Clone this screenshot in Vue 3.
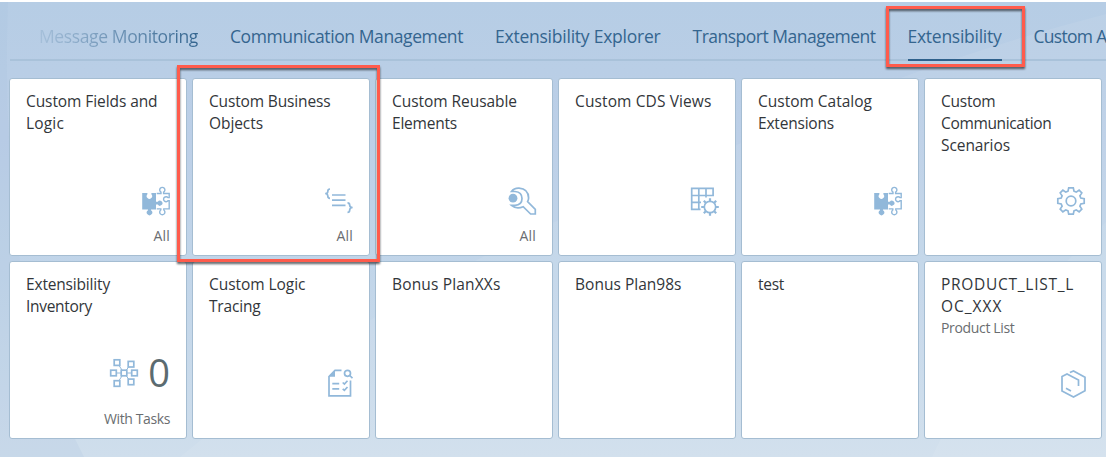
<script setup>
const tabs = [
  { label: 'Message Monitoring', width: 159, faded: true },
  { label: 'Communication Management', width: 233 },
  { label: 'Extensibility Explorer', width: 165.5 },
  { label: 'Transport Management', width: 183 },
  { label: 'Extensibility', width: 94, active: true },
  { label: 'Custom A', width: 73 },
]

const tiles = [
  { lines: [['Custom Fields and', 131.5], ['Logic', 38]], icon: 'puzzle', footer: 'All', footerWidth: 16.5 },
  { lines: [['Custom Business', 121.5], ['Objects', 54]], icon: 'braces', footer: 'All', footerWidth: 16.5 },
  { lines: [['Custom Reusable', 125], ['Elements', 65]], icon: 'wrench', footer: 'All', footerWidth: 16.5 },
  { lines: [['Custom CDS Views', 136.5]], icon: 'table' },
  { lines: [['Custom Catalog', 114], ['Extensions', 76]], icon: 'puzzle' },
  { lines: [['Custom', 54.5], ['Communication', 110.5], ['Scenarios', 69]], icon: 'gear' },
  { lines: [['Extensibility', 84], ['Inventory', 66]], icon: 'network', value: '0', footer: 'With Tasks', footerWidth: 66 },
  { lines: [['Custom Logic', 96.5], ['Tracing', 51.5]], icon: 'checklist' },
  { lines: [['Bonus PlanXXs', 108.5]] },
  { lines: [['Bonus Plan98s', 106.5]] },
  { lines: [['test', 26]] },
  { lines: [['PRODUCT_LIST_L', 133], ['OC_XXX', 61.5]], subtitle: 'Product List', subtitleWidth: 73.5, icon: 'product' },
]

// Tracks a label so that it fills the given width.
const vFit = {
  mounted(el, { value }) {
    if (!value) return
    const natural = el.getBoundingClientRect().width
    el.style.letterSpacing = `${(value - natural) / el.textContent.length}px`
  },
}
</script>

<template>
  <div class="page">
    <svg class="backdrop" viewBox="0 0 1106 455" preserveAspectRatio="none">
      <path d="M0 0H8Q2 150 26 300Q50 390 84 455H0Z" fill="#9fb9da" opacity=".16" />
      <path d="M1106 12Q900 65 700 160Q400 270 180 455H1106Z" fill="#fff" opacity=".07" />
      <path d="M1106 220Q990 330 932 455H1106Z" fill="#fff" opacity=".08" />
    </svg>

    <nav class="tabs">
      <div v-for="tab in tabs" :key="tab.label" class="tab" :class="{ active: tab.active, faded: tab.faded }">
        <span v-fit="tab.width">{{ tab.label }}</span>
      </div>
    </nav>

    <main class="grid">
      <section v-for="(tile, i) in tiles" :key="i" class="tile">
        <h3 class="title">
          <span v-for="line in tile.lines" :key="line[0]" class="line"><span v-fit="line[1]">{{ line[0] }}</span></span>
        </h3>
        <p v-if="tile.subtitle" class="subtitle"><span v-fit="tile.subtitleWidth">{{ tile.subtitle }}</span></p>
        <div class="content" :class="{ numeric: tile.value }">
          <svg v-if="tile.icon" class="icon" :class="tile.icon" viewBox="0 0 30 30">
            <g v-if="tile.icon === 'puzzle'">
              <path class="solid" d="M1.2 7H6.4V8.3A2.7 2.7 0 1 0 10.4 8.3V7H15V15.8H16.8A2.5 2.5 0 1 1 16.8 18.6H15V23.6H10V24.3A2.7 2.7 0 1 1 7 24.3V23.6H1.2Z" />
              <path d="M15.7 7.5H20V6.2A2.6 2.6 0 1 1 22.6 6.2V7.5H28.2V11.6H27A2.5 2.5 0 1 0 27 14.8H28.2V22.9H22.8V24A2.6 2.6 0 1 1 19.8 24V22.9H15.7" />
            </g>
            <g v-else-if="tile.icon === 'braces'">
              <path d="M6 3Q3.8 3 3.8 5.4Q3.8 7.5 1.2 7.5Q3.8 7.7 3.8 10Q3.8 12.3 6 12.3M8 9H21.5M8 14.2H21.5M8 19.4H21.5M23.5 16.8Q25.7 16.8 25.7 19.2Q25.7 21.4 28.6 21.5Q25.7 21.7 25.7 24Q25.7 26.4 23.5 26.4" />
            </g>
            <g v-else-if="tile.icon === 'wrench'">
              <circle class="solid" cx="6" cy="12.2" r="4.4" />
              <path d="M4.5 5.5Q7 2 12 2.2Q21.4 3 21.6 12Q21.5 14 20.6 15.7L28.3 23.4V28H23.6L16.2 20.7Q9.5 23.7 4.5 19.4H8Q15 19 15 12.5T8 5.5Z" />
            </g>
            <g v-else-if="tile.icon === 'table'">
              <path d="M10.5 23.3H1.7V2.3H23.1V9.5H1.7M1.7 16.4H11M8.8 2.3V23M16 2.3V11.5" />
              <circle cx="20" cy="21" r="5.7" />
              <path class="teeth" d="M20 12.2V15M20 27V29.8M11.2 21H14M26 21H28.8M13.8 14.8L15.8 16.8M24.2 25.2L26.2 27.2M26.2 14.8L24.2 16.8M15.8 25.2L13.8 27.2" />
            </g>
            <g v-else-if="tile.icon === 'gear'">
              <path d="M12.7 1.8H17.3L18 5.2L20.2 6.1L23.1 4.2L25.8 6.9L23.9 9.8L24.8 12L28.2 12.7V17.3L24.8 18L23.9 20.2L25.8 23.1L23.1 25.8L20.2 23.9L18 24.8L17.3 28.2H12.7L12 24.8L9.8 23.9L6.9 25.8L4.2 23.1L6.1 20.2L5.2 18L1.8 17.3V12.7L5.2 12L6.1 9.8L4.2 6.9L6.9 4.2L9.8 6.1L12 5.2Z" />
              <circle cx="15" cy="15" r="4.8" />
            </g>
            <g v-else-if="tile.icon === 'network'">
              <path class="thin" d="M15 15L8 4.5M15 15L22 6M15 15H4M15 15H26M15 15L8 25.5M15 15L22 24" />
              <g class="nodes">
                <rect x="12.2" y="12.2" width="5.6" height="5.6" />
                <rect x="5.2" y="1.8" width="5.6" height="5.6" />
                <rect x="19.2" y="3.4" width="5.6" height="5.6" />
                <rect x="1.7" y="12.2" width="5.6" height="5.6" />
                <rect x="22.7" y="12.2" width="5.6" height="5.6" />
                <rect x="5.2" y="22.7" width="5.6" height="5.6" />
                <rect x="19.2" y="21.1" width="5.6" height="5.6" />
              </g>
            </g>
            <g v-else-if="tile.icon === 'checklist'">
              <path d="M15.5 2.3H9L3 8.5V27.9H24.5V12.5M6.3 15.7H13.2M6.3 20.8H13.2M16.7 14.5L18.4 16.1L21.5 12.7M16.7 20.8L18.4 22.4L21.5 19" />
              <path class="solid" d="M9 2L2.5 8.8H9Z" />
              <circle cx="21.5" cy="5.3" r="3" />
              <path d="M23.7 7.5L26.5 10.2" />
            </g>
            <g v-else>
              <path d="M11.9 3.6L15.5 1.9L27 8.2V21.8L15.5 28L4 22.1V7.5L9 5L20.5 11V17M8 19.3L13 22" />
            </g>
          </svg>
          <span v-if="tile.value" class="value">{{ tile.value }}</span>
        </div>
        <footer v-if="tile.footer" class="footer"><span v-fit="tile.footerWidth">{{ tile.footer }}</span></footer>
      </section>
    </main>

    <div class="highlight tile-highlight"></div>
    <div class="highlight tab-highlight"></div>
  </div>
</template>

<style>
html, body { margin: 0; overflow: hidden; background: #fff; }
</style>

<style scoped>
.page {
  position: relative;
  box-sizing: border-box;
  width: 1106px;
  height: 457px;
  border-top: 2px solid #fff;
  overflow: hidden;
  background: linear-gradient(#b6cde5 0%, #bccfe7 30%, #c1d5e9 58%, #cfdeec 100%);
  font-family: "Open Sans", "Noto Sans", sans-serif;
}
.backdrop { position: absolute; inset: 0; width: 100%; height: 100%; }
.tabs {
  position: relative;
  box-sizing: border-box;
  display: flex;
  gap: 32px;
  height: 59px;
  margin-left: 10px;
  padding-left: 29px;
  border-bottom: 2px solid #a9c2da;
}
.tab {
  box-sizing: border-box;
  flex: none;
  height: 59px;
  padding-top: 20px;
  color: #34658f;
  font-size: 17.5px;
  line-height: 28px;
  white-space: nowrap;
}
.tab.active { border-bottom: 2px solid #2f618c; }
.tab.faded span {
  color: transparent;
  background: linear-gradient(90deg, #a6c0da, #34658f);
  background-clip: text;
}
.grid {
  position: relative;
  display: grid;
  grid-template-columns: repeat(6, 178px);
  grid-auto-rows: 178px;
  gap: 5px;
  margin: 17px 0 0 9px;
}
.tile {
  box-sizing: border-box;
  display: flex;
  flex-direction: column;
  padding: 11px 16px 8px;
  border: 1px solid #a5bdd2;
  border-radius: 3px;
  background: #fff;
}
.title { margin: 0; color: #32363a; font-size: 15.5px; font-weight: 400; line-height: 22px; }
.line { display: block; white-space: nowrap; }
.subtitle { margin: 0; color: #6a6d70; font-size: 14px; line-height: 22px; white-space: nowrap; }
.content {
  display: flex;
  flex: 1;
  align-items: flex-end;
  justify-content: flex-end;
}
.icon {
  width: 30px;
  height: 30px;
  margin: 0 -1px 31px 0;
  fill: none;
  stroke: #91b8da;
  stroke-width: 1.7;
}
.content:not(:last-child) .icon { margin-bottom: 9px; }
.icon.checklist { margin: 0 -3px 32px 0; }
.icon.product { margin-right: -3px; }
.icon .solid { fill: #91b8da; stroke: none; }
.icon.puzzle { stroke-width: 1.4; }
.icon .teeth { stroke-width: 2.2; }
.icon .thin { stroke-width: 1; }
.nodes { fill: #fff; }
.value {
  width: 22px;
  margin: 0 0 18px 9px;
  color: #5b6b70;
  font-size: 38px;
  line-height: 36px;
  text-align: center;
}
.content.numeric .icon { margin: 0 0 20px; }
.footer { height: 22px; color: #6a6d70; font-size: 14px; line-height: 22px; text-align: right; white-space: nowrap; }
.highlight {
  position: absolute;
  box-sizing: border-box;
  border: 3px solid #ff5b4c;
  filter: drop-shadow(0 2px 1px rgba(35, 40, 45, .75));
}
.tile-highlight { left: 177px; top: 63px; width: 203px; height: 197px; }
.tab-highlight { left: 886px; top: 4px; width: 139px; height: 61px; }
</style>
